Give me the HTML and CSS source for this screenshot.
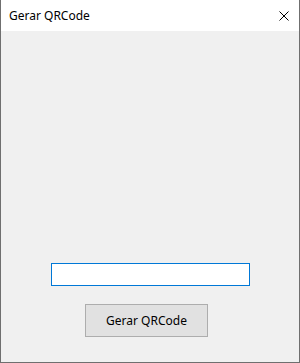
FILE: index.html
```html
<html lang="pt">
	<head>
		<meta charset="UTF-8">
		<title>Gerar QRCode</title>
		<link rel="stylesheet" href="styles.css">
	</head>
	<body>
		<div class="window">
			<div class="titlebar">
				<span class="title">Gerar QRCode</span>
				<span class="close">
					<svg width="10" height="10" viewBox="0 0 10 10">
						<path d="M0.5 0.5 L9.5 9.5 M9.5 0.5 L0.5 9.5" stroke="#000" stroke-width="1" fill="none"/>
					</svg>
				</span>
			</div>
			<div class="client">
				<input class="text-field" type="text">
				<button class="btn" type="button">Gerar QRCode</button>
			</div>
		</div>
	</body>
</html>
```

FILE: styles.css
```css
body {
	margin: 0;
	font-family: "Noto Sans", "Open Sans", sans-serif;
	font-size: 12px;
	color: #000;
}
.window {
	width: 300px;
	height: 363px;
	box-sizing: border-box;
	border: 1px solid #6f6f6f;
	border-top: 0;
	display: flex;
	flex-direction: column;
}
.titlebar {
	height: 31px;
	background: #fff;
	display: flex;
	align-items: center;
	justify-content: space-between;
	padding-left: 8px;
	padding-right: 10px;
	flex: none;
}
.title {
	font-size: 12px;
}
.close {
	display: flex;
	width: 10px;
	height: 10px;
}
.client {
	flex: 1;
	background: #f0f0f0;
	display: flex;
	flex-direction: column;
	justify-content: flex-end;
	align-items: flex-start;
	padding-bottom: 25px;
}
.text-field {
	margin: 0 0 18px 50px;
	width: 199px;
	height: 23px;
	box-sizing: border-box;
	border: 1px solid #0078d7;
	background: #fff;
	padding: 0 3px;
	outline: none;
	font: inherit;
}
.btn {
	margin-left: 84px;
	width: 123px;
	height: 33px;
	box-sizing: border-box;
	border: 1px solid #adadad;
	background: #e1e1e1;
	font: inherit;
	color: #000;
	padding: 0;
}
```
